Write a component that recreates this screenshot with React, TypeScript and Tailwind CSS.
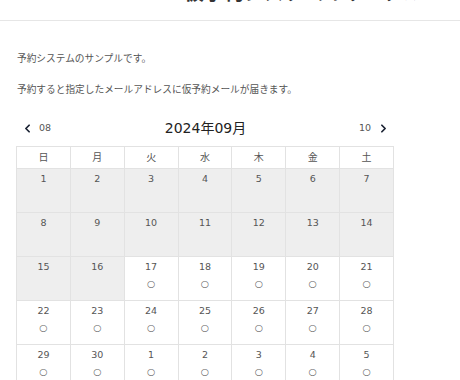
import { ChevronLeft, ChevronRight } from 'lucide-react';

const WEEK = ['日', '月', '火', '水', '木', '金', '土'];

type Day = { n: number; open: boolean };

const days: Day[] = [
  ...Array.from({ length: 16 }, (_, i) => ({ n: i + 1, open: false })),
  ...Array.from({ length: 14 }, (_, i) => ({ n: i + 17, open: true })),
  ...Array.from({ length: 5 }, (_, i) => ({ n: i + 1, open: true })),
];

export default function App() {
  return (
    <div
      className="min-h-[380px] bg-white text-[#555]"
      style={{ fontFamily: '"DejaVu Sans", "Noto Sans CJK JP", sans-serif' }}
    >
      <header className="h-[21px] overflow-hidden border-b border-[#e6e6e6]">
        <div className="-mt-[18px] pl-[184px] text-[20px] font-bold leading-[22px] text-[#333]">
          仮予約システムのサンプル
        </div>
      </header>

      <main className="px-[16px]">
        <p className="mt-[31px] pl-px text-[9.7px] leading-[14px]">予約システムのサンプルです。</p>
        <p className="mt-[17px] pl-px text-[9.7px] leading-[14px]">
          予約すると指定したメールアドレスに仮予約メールが届きます。
        </p>

        <div className="mt-[21px] flex h-[20px] w-[378px] items-center justify-between pl-[5px] pr-[4px]">
          <div className="flex w-[80px] items-center gap-[5px]">
            <ChevronLeft size={13} strokeWidth={3.2} className="text-[#1a2233]" />
            <span className="text-[9.5px]">08</span>
          </div>
          <div className="text-[14px] text-[#222]">2024年09月</div>
          <div className="flex w-[80px] items-center justify-end gap-[6px]">
            <span className="text-[9.5px]">10</span>
            <ChevronRight size={13} strokeWidth={3.2} className="text-[#1a2233]" />
          </div>
        </div>

        <div className="mt-[8px] grid w-[378px] grid-cols-7 border-l border-t border-[#e2e2e2]">
          {WEEK.map((w) => (
            <div
              key={w}
              className="flex h-[22px] items-center justify-center border-b border-r border-[#e2e2e2] text-[10px]"
            >
              {w}
            </div>
          ))}
          {days.map((d, i) => (
            <div
              key={i}
              className={`flex h-[44px] flex-col items-center border-b border-r border-[#e2e2e2] pt-[3px] ${
                d.open ? 'bg-white' : 'bg-[#eeeeee]'
              }`}
            >
              <span className="text-[9.5px] leading-[14px]">{d.n}</span>
              {d.open && (
                <span className="mt-[4px] text-[9.5px] leading-[12px] text-[#666]">○</span>
              )}
            </div>
          ))}
        </div>
      </main>
    </div>
  );
}
